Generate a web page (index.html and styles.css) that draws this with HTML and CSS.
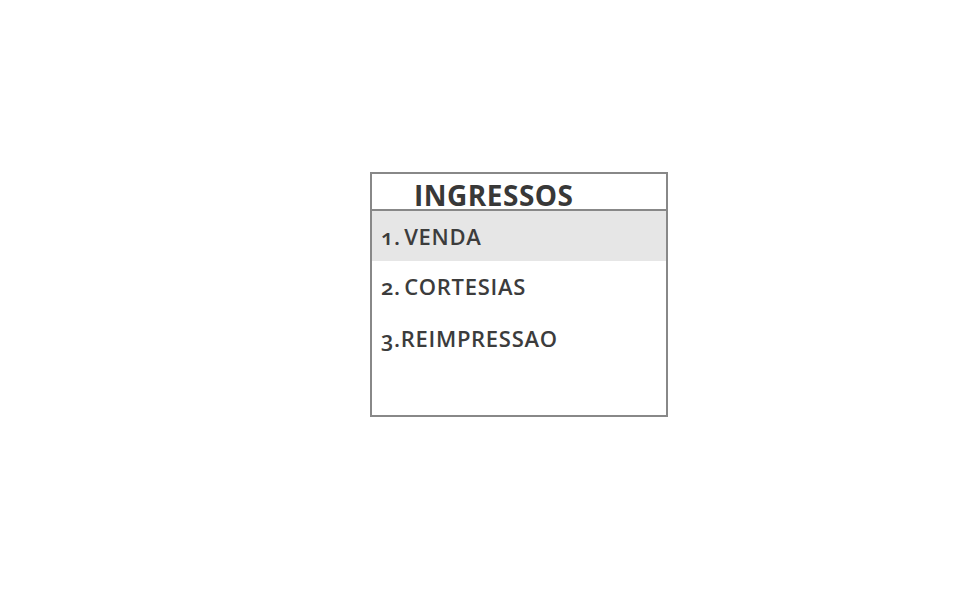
FILE: index.html
```html
<!DOCTYPE html>
<html lang="pt">
<head>
    <meta charset="UTF-8">
    <title>Ingressos</title>
    <link rel="stylesheet" href="styles.css">
</head>
<body>
    <div class="menu">
        <div class="menu-title">INGRESSOS</div>
        <ul class="menu-list">
            <li class="menu-item selected">1. VENDA</li>
            <li class="menu-item">2. CORTESIAS</li>
            <li class="menu-item">3.REIMPRESSAO</li>
        </ul>
    </div>
</body>
</html>
```
FILE: styles.css
```css
body {
    margin: 0;
    background: #fff;
    font-family: "Open Sans", sans-serif;
    font-variant-numeric: oldstyle-nums;
    color: #383838;
}
.menu {
    width: 298px;
    height: 245px;
    margin: 172px 0 0 370px;
    border: 2px solid #888;
    box-sizing: border-box;
}
.menu-title {
    height: 28px;
    padding-top: 7px;
    border-bottom: 2px solid #888;
    padding-left: 42px;
    font-size: 28px;
    font-weight: bold;
    line-height: 29px;
    letter-spacing: 0.5px;
}
.menu-list {
    list-style: none;
    margin: 0;
    padding: 0;
}
.menu-item {
    height: 52px;
    line-height: 51px;
    padding-left: 9px;
    font-size: 22px;
    font-weight: 600;
    letter-spacing: 0.7px;
    word-spacing: -3px;
    color: #3c3c3c;
}
.menu-item.selected {
    background: #e6e6e6;
    height: 50px;
    line-height: 50px;
}
```
